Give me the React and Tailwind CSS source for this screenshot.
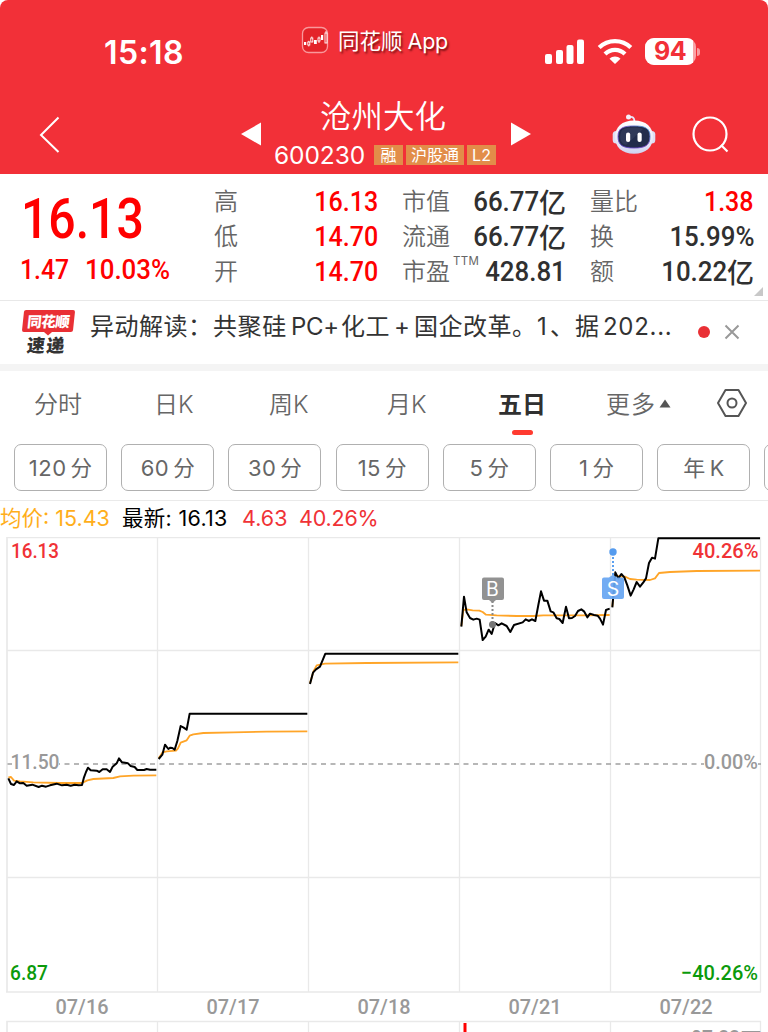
import React from "react";

const stats = [
    [
        { label: "高", value: "16.13", red: true },
        { label: "低", value: "14.70", red: true },
        { label: "开", value: "14.70", red: true },
    ],
    [
        { label: "市值", value: "66.77", unit: "亿" },
        { label: "流通", value: "66.77", unit: "亿" },
        { label: "市盈", value: "428.81", ttm: true },
    ],
    [
        { label: "量比", value: "1.38", red: true },
        { label: "换", value: "15.99%" },
        { label: "额", value: "10.22", unit: "亿" },
    ],
];

const periods = [["120", "分"], ["60", "分"], ["30", "分"], ["15", "分"], ["5", "分"], ["1", "分"], ["年", "K"]];

// the first three sessions and the last two are plotted in their own groups
const earlyAvg = [
    "25,412 33,411 42,422 60,424 100,427 180,429 246,429 262,421 280,417 340,414 360,409 400,407 469,406",
    "476,355 488,337 500,334 528,332 534,325 542,308 552,304 560,301 569,287 580,283 610,279 700,277 800,275 922,274",
    "930,130 940,95 950,76 975,71 1100,69 1375,67",
];
const earlyPrice = [
    "25,415 33,432 42,435 50,424 60,430 70,429 80,437 97,434 116,441 126,437 138,440 150,436 170,431 186,436 200,434 212,437 224,434 236,436 246,435 252,412 258,396 264,383 272,391 290,392 298,396 308,388 320,388 330,396 338,380 350,370 357,355 366,367 384,370 392,378 404,381 412,390 432,390 440,387 450,389 469,389",
    "476,357 487,344 495,314 505,327 511,323 517,324 524,329 532,303 542,258 551,263 560,269 569,221 922,221",
    "930,132 939,98 948,88 960,80 976,41 1375,41",
];
const lateAvg = [
    "34,288 40,240 50,238 68,241 88,242 98,246 108,254 140,256 200,258 250,258 280,256 400,256 479,255",
    "487,230 496,135 510,140 525,140 540,147 560,149 600,150 615,145 627,129 660,126 740,123 930,122",
];
const latePrice = [
    "34,290 42,200 50,247 60,264 70,269 80,266 89,269 98,330 107,320 116,299 125,312 135,279 145,286 155,280 170,288 181,306 192,285 218,277 227,268 236,273 246,268 256,273 265,225 273,184 282,212 292,212 302,244 310,247 320,265 328,267 338,279 348,230 357,265 366,264 375,258 384,243 394,238 402,244 412,262 420,251 432,255 443,257 450,266 459,284 468,240 479,236",
    "487,232 496,127 505,145 514,132 523,142 532,166 542,197 551,178 560,156 570,170 580,157 588,145 597,99 606,83 615,86 625,25 930,25",
];

const Lines = ({ data, color, width }) =>
    data.map((points) => (
        <polyline key={points} points={points} fill="none" stroke={color} strokeWidth={width} strokeLinejoin="round" />
    ));

const RobotIcon = () => (
    <svg width="44" height="42" viewBox="0 0 44 42">
        <defs>
            <linearGradient id="head" x1="0" y1="0" x2="0" y2="1">
                <stop offset="0" stopColor="#ffffff" />
                <stop offset="0.75" stopColor="#e2e2f5" />
                <stop offset="1" stopColor="#cdd2f0" />
            </linearGradient>
            <linearGradient id="rim" x1="0" y1="1" x2="1" y2="0">
                <stop offset="0" stopColor="#5a4bc8" />
                <stop offset="0.5" stopColor="#7a48c8" />
                <stop offset="1" stopColor="#3f9cc8" />
            </linearGradient>
        </defs>
        <path d="M17 4.200C21 3.200 22.500 5 22.500 9" fill="none" stroke="#e6e4f8" strokeWidth="1.800" />
        <circle cx="16.500" cy="4" r="2.500" fill="#f4f0fb" />
        <rect x="0.700" y="18" width="7" height="12.500" rx="3.500" fill="#dedef4" />
        <rect x="36.300" y="18" width="7" height="12.500" rx="3.500" fill="#dedef4" />
        <path d="M22 7.500C34 7.500 41 14 41 24S34 40.800 22 40.800 3 34 3 24 10 7.500 22 7.500Z" fill="url(#head)" />
        <path d="M22 13C32 13 38 14.500 38 23.500S33 35 22 35 6 32.500 6 23.500 12 13 22 13Z" fill="#222c4b" stroke="url(#rim)" strokeWidth="0.900" />
        <path d="M10 17C15 14 25 14 31 16L14 32C7 30 7 22 10 17Z" fill="#3c4666" opacity="0.5" />
        <rect x="14" y="19.500" width="4.200" height="9.500" rx="2.100" fill="#fff" />
        <rect x="25.500" y="19.500" width="4.200" height="9.500" rx="2.100" fill="#fff" />
    </svg>
);

const StatusBar = () => (
    <div className="flex h-[88px] items-start pt-[25px]">
        <div className="ml-[104px] mt-[8px] w-[197px] text-[32px] font-semibold leading-[40px] tracking-[0.4px]">15:18</div>
        <svg className="mt-[1px]" width="28" height="28" viewBox="0 0 28 28">
            <rect x="1.500" y="1.500" width="25" height="25" rx="6" fill="#e42329" stroke="#f9989b" strokeWidth="1.300" />
            <g fill="#fff">
                <rect x="3" y="16" width="2.200" height="3" />
                <rect x="13" y="14" width="2.800" height="4" />
                <rect x="20" y="9" width="2.200" height="5" />
            </g>
            <g fill="none" stroke="#fff" strokeWidth="0.900">
                <rect x="6.800" y="16" width="2" height="3" />
                <rect x="9.800" y="12" width="2" height="4" />
                <rect x="17" y="12" width="2" height="3" />
                <rect x="24" y="7" width="2" height="10" />
                <path d="M7.800 14.800V16M7.800 19V20.500M10.800 10.500V12M18 10.500V12M18 15V17M25 5V7" />
            </g>
        </svg>
        <div className="ml-[9px] mt-[1px] flex w-[207px] whitespace-nowrap text-[21.500px] leading-[30px] [text-shadow:1.500px_2px_2px_rgba(60,0,0,0.65)]">
            <span>同花顺</span>
            <span className="ml-[5px] tracking-[-0.2px]">App</span>
        </div>
        <svg className="mt-[14px]" width="40" height="25" viewBox="0 0 40 25" fill="#fff">
            <rect x="0" y="15" width="7" height="10" rx="2" />
            <rect x="11" y="11" width="7" height="14" rx="2" />
            <rect x="21.500" y="6" width="7" height="19" rx="2" />
            <rect x="32" y="0.500" width="7" height="24.500" rx="2" />
        </svg>
        <svg className="ml-[12px] mt-[13px]" width="36" height="27" viewBox="0 0 36 27" fill="none" stroke="#fff" strokeWidth="4.200">
            <path d="M2.200 9.600C11 1 25 1 33.800 9.600" />
            <path d="M8 16C13.500 10.500 22.500 10.500 28 16" />
            <path d="M12.500 20.700C15.500 17.700 20.500 17.700 23.500 20.700L18 26Z" fill="#fff" stroke="none" />
        </svg>
        <div className="ml-[12px] mt-[13px] flex items-center">
            <div className="flex h-[27px] w-[51px] overflow-hidden rounded-[9px] bg-[#f9a3a7]">
                <div className="flex w-[48px] items-center justify-center bg-white pl-[2px] text-[25px] font-bold leading-none tracking-[-0.6px] text-[#f23038]">94</div>
            </div>
            <div className="ml-[1px] h-[8px] w-[3px] rounded-r-full bg-[#f99ba0]"></div>
        </div>
    </div>
);

const Header = () => (
    <header className="h-[174px] rounded-t-[8px] bg-[#f23038] text-white">
        <StatusBar />
        <div className="flex h-[86px]">
            <svg className="ml-[38px] mt-[28px]" width="24" height="38" viewBox="0 0 24 38" fill="none" stroke="#fff" strokeWidth="2">
                <path d="M20.500 1.500L3 19L20.500 36" />
            </svg>
            <svg className="ml-[178px] mt-[34px]" width="22" height="24" viewBox="0 0 22 24">
                <path d="M21 0.500V23.500L1 12Z" fill="#fff" />
            </svg>
            <div className="ml-[12px] w-[236px]">
                <div className="ml-[46px] mt-[9px] whitespace-nowrap text-[31.500px] font-[350] leading-[40px]">沧州大化</div>
                <div className="mt-[6px] flex items-center whitespace-nowrap leading-[24px]">
                    <span className="w-[100px] text-[24.500px] tracking-[-0.1px]">600230</span>
                    <span className="flex h-[20px] w-[29px] items-center justify-center bg-[#e28d49] text-[16px]">融</span>
                    <span className="ml-[3px] flex h-[20px] w-[58px] items-center justify-center bg-[#e28d49] text-[16px]">沪股通</span>
                    <span className="ml-[3px] flex h-[20px] w-[29px] items-center justify-center bg-[#e28d49] text-[16px]">L2</span>
                </div>
            </div>
            <svg className="mt-[34px]" width="22" height="24" viewBox="0 0 22 24">
                <path d="M1 0.500V23.500L21 12Z" fill="#fff" />
            </svg>
            <div className="ml-[80px] mt-[25px]">
                <RobotIcon />
            </div>
            <svg className="ml-[36px] mt-[27px]" width="40" height="40" viewBox="0 0 40 40" fill="none" stroke="#fff" strokeWidth="2.200">
                <circle cx="18" cy="19" r="16.500" />
                <path d="M29 30L35.500 36.500" />
            </svg>
        </div>
    </header>
);

const Stat = ({ item }) => (
    <div className="flex h-[35px] items-center justify-between whitespace-nowrap">
        <span className="flex text-[24px] font-[350] text-[#666]">
            {item.label}
            {item.ttm && <sup className="top-[-3px] ml-[3px] w-0 text-[11.500px] font-normal leading-[20px] tracking-[0.3px]">TTM</sup>}
        </span>
        <span className={item.red ? "flex items-center font-['Roboto'] text-[27.500px] font-medium text-[#ff0000]" : "flex items-center font-['Roboto'] text-[27.500px] font-medium text-[#303030]"}>
            <span className={item.red ? "origin-right scale-x-[0.91]" : "origin-right scale-x-[0.94]"}>{item.value}</span>
            {item.unit && <span className="font-['Noto_Sans_CJK_SC'] text-[27px] leading-[35px]">{item.unit}</span>}
        </span>
    </div>
);

const Quote = () => (
    <section className="flex h-[127px] border-b border-[#e8e8e8]">
        <div className="w-[214px] font-['Roboto'] font-medium text-[#ff0000]">
            <div className="ml-[21px] mt-[13px] w-[140px] origin-left scale-x-[0.86] text-[56px] leading-[64px]">16.13</div>
            <div className="ml-[20px] mt-[2px] flex text-[27.500px] leading-[34px]">
                <span className="w-[65px] origin-left scale-x-[0.9]">1.47</span>
                <span className="origin-left scale-x-[0.94]">10.03%</span>
            </div>
        </div>
        <div className="mt-[10px] flex gap-[24px]">
            {stats.map((column, i) => (
                <div key={i} className="w-[164px]">
                    {column.map((item) => <Stat key={item.label} item={item} />)}
                </div>
            ))}
        </div>
        <svg className="mt-[113px]" width="10" height="10" viewBox="0 0 10 10">
            <path d="M9 0V9H0Z" fill="#c8c8c8" />
        </svg>
    </section>
);

const News = () => (
    <section className="flex h-[63px] text-[#333]">
        <div className="ml-[23px] mt-[9px] w-[67px] font-['Noto_Sans_CJK_SC']">
            <div className="flex h-[22px] w-[51px] -skew-x-6 items-center justify-center rounded-[2px] bg-[#e93035] text-[14.500px] font-black leading-none tracking-[-0.5px] text-white">同花顺</div>
            <svg className="ml-[21px]" width="8" height="4" viewBox="0 0 8 4"><path d="M0 0H8L4 3.500Z" fill="#e93035" /></svg>
            <div className="-mt-[1px] ml-[4px] w-[42px] -skew-x-6 whitespace-nowrap text-[18px] font-black leading-[18px] tracking-[1.500px]">速递</div>
        </div>
        <div className="mt-[9px] flex w-[606px] whitespace-nowrap text-[24px] leading-[34px]">
            <span className="w-[123px] tracking-[0.5px]">异动解读：</span>
            <span className="w-[78px] tracking-[0.6px]">共聚硅</span>
            <span className="w-[50px] tracking-[-0.3px]">PC+</span>
            <span className="w-[53px] tracking-[0.5px]">化工</span>
            <span className="w-[20px]">+</span>
            <span className="w-[123px] tracking-[0.5px]">国企改革。</span>
            <span className="w-[13px]">1</span>
            <span className="w-[25px]">、</span>
            <span className="w-[28px]">据</span>
            <span className="tracking-[0.7px]">202...</span>
        </div>
        <div className="ml-[2px] mt-[25px] h-[12px] w-[12px] rounded-full bg-[#e93035]"></div>
        <svg className="ml-[14px] mt-[23px]" width="16" height="16" viewBox="0 0 16 16" stroke="#999" strokeWidth="2">
            <path d="M1.500 1.500L14.500 14.500M14.500 1.500L1.500 14.500" />
        </svg>
    </section>
);

const Tabs = () => (
    <nav className="flex h-[64px] whitespace-nowrap pt-[16px] text-[24px] font-[350] leading-[36px] text-[#666]">
        <span className="ml-[34px] w-[120px]">分时</span>
        <span className="w-[115px]">日K</span>
        <span className="w-[118px]">周K</span>
        <span className="w-[111px]">月K</span>
        <div className="flex w-[108px] flex-col">
            <span className="font-bold text-[#303030]">五日</span>
            <span className="ml-[14px] mt-[7px] h-[5px] w-[21px] rounded-full bg-[#ff3b30]"></span>
        </div>
        <div className="flex w-[110px]">
            <span className="tracking-[1px]">更多</span>
            <svg className="ml-[3px] mt-[12px]" width="12" height="9" viewBox="0 0 12 9"><path d="M6 0.500L11.500 8.500H0.500Z" fill="#555" /></svg>
        </div>
        <svg className="mt-[1px]" width="32" height="30" viewBox="0 0 32 30" fill="none" stroke="#555" strokeWidth="2">
            <path d="M9.500 2H22.500L30 15L22.500 28H9.500L2 15Z" strokeLinejoin="round" />
            <circle cx="16" cy="15" r="4.500" />
        </svg>
    </nav>
);

const Periods = () => (
    <div className="flex h-[66px] gap-[14.200px] overflow-hidden border-b border-[#eaeaea] pl-[14px] pt-[9px]">
        {periods.map(([a, b]) => (
            <button key={a} className="flex h-[47px] w-[93px] shrink-0 items-center justify-center gap-[4px] rounded-[7px] border border-[#b0b0b0] pt-[1px] text-[22px] text-[#666]">
                <span className="tracking-[0.5px]">{a}</span>
                <span className="text-[21.500px]">{b}</span>
            </button>
        ))}
        <button className="h-[47px] w-[93px] shrink-0 rounded-[7px] border border-[#b0b0b0]"></button>
    </div>
);

const Chart = () => (
    <svg className="block" width="768" height="495" viewBox="0 537 768 495" fontFamily="Roboto" fontWeight="500" fontSize="21">
        <g stroke="#e9e9e9" strokeWidth="1.300" fill="none">
            <path d="M7 537.500H761M7 650.500H761M7 877.500H761" />
            <path d="M157.500 537V992M308.500 537V992M459.500 537V992M610.500 537V992M760.500 537V992" />
            <path d="M157.500 1021V1032M308.500 1021V1032M459.500 1021V1032M610.500 1021V1032M760.500 1021V1032" />
            <path d="M7 537V992M6 992H761M7 1032V1021.500H761" strokeWidth="1.700" />
        </g>
        <path d="M7.500 764H761" stroke="#a0a0a0" strokeWidth="1.600" strokeDasharray="5 4.500" />
        <g fill="#fff">
            <rect x="12" y="752" width="47" height="20" />
            <rect x="704" y="752" width="54" height="20" />
        </g>
        <text x="10.500" y="769" textLength="49" lengthAdjust="spacingAndGlyphs" fill="#999">11.50</text>
        <text x="704" y="769" textLength="54" lengthAdjust="spacingAndGlyphs" fill="#999">0.00%</text>
        <g transform="translate(0 640) scale(0.33333)">
            <Lines data={earlyAvg} color="#ffa528" width="5.500" />
            <Lines data={earlyPrice} color="#000" width="6" />
        </g>
        <g transform="translate(450 530) scale(0.33333)">
            <Lines data={lateAvg} color="#ffa528" width="5.500" />
            <Lines data={latePrice} color="#000" width="6" />
        </g>
        <path d="M492.500 601V623" stroke="#888" strokeWidth="2" strokeDasharray="2 2" />
        <circle cx="492.500" cy="624.500" r="3.500" fill="#777" />
        <path d="M484 577.500H502Q504 577.500 504 579.500V598Q504 600 502 600H496L492.500 603L489 600H484Q482 600 482 598V579.500Q482 577.500 484 577.500Z" fill="#8c8c8c" opacity="0.95" />
        <path d="M613 553V576" stroke="#5ba0f0" strokeWidth="2" strokeDasharray="2 2" />
        <circle cx="613" cy="552" r="3.700" fill="#559bee" />
        <path d="M604 577.500H609L613 574.500L617 577.500H622Q624 577.500 624 579.500V597Q624 599 622 599H604Q602 599 602 597V579.500Q602 577.500 604 577.500Z" fill="#67a6f2" opacity="0.93" />
        <g fill="#fff" fontFamily="Inter" fontWeight="400" fontSize="19.500" textAnchor="middle">
            <text x="492.500" y="596">B</text>
            <text x="613" y="596">S</text>
        </g>
        <g fill="#f03236">
            <text x="11" y="557.500" textLength="48" lengthAdjust="spacingAndGlyphs">16.13</text>
            <text x="692.500" y="557.500" textLength="66" lengthAdjust="spacingAndGlyphs">40.26%</text>
        </g>
        <g fill="#0b9a0b">
            <text x="10" y="979.500" textLength="38" lengthAdjust="spacingAndGlyphs">6.87</text>
            <text x="681" y="979.500" textLength="77" lengthAdjust="spacingAndGlyphs">−40.26%</text>
        </g>
        <g fill="#999">
            <text x="55.500" y="1013.500" textLength="53" lengthAdjust="spacingAndGlyphs">07/16</text>
            <text x="206.500" y="1013.500" textLength="53" lengthAdjust="spacingAndGlyphs">07/17</text>
            <text x="357.500" y="1013.500" textLength="53" lengthAdjust="spacingAndGlyphs">07/18</text>
            <text x="508.500" y="1013.500" textLength="53" lengthAdjust="spacingAndGlyphs">07/21</text>
            <text x="659.500" y="1013.500" textLength="53" lengthAdjust="spacingAndGlyphs">07/22</text>
        </g>
        <rect x="463.500" y="1023" width="3" height="9" fill="#ff0000" />
        <text x="691" y="1044.500" textLength="49" lengthAdjust="spacingAndGlyphs" fill="#999">07.22</text>
        <text x="740.500" y="1047" fill="#999" fontFamily="Noto Sans CJK SC">万</text>
    </svg>
);

const App = () => {
    return (
        <main className="h-[1032px] w-[768px] overflow-hidden bg-white font-['Inter','Noto_Sans_CJK_SC',sans-serif]">
            <Header />
            <Quote />
            <News />
            <div className="h-[7px] bg-[#f4f4f4]"></div>
            <Tabs />
            <Periods />
            <div className="flex h-[36px] whitespace-nowrap text-[21.500px] leading-[35px]">
                <span className="w-[122px] text-[#ffae1a]">均价: 15.43</span>
                <span className="w-[120px] tracking-[0.3px] text-black">最新: 16.13</span>
                <span className="w-[57px] text-[#f03236]">4.63</span>
                <span className="tracking-[-0.2px] text-[#f03236]">40.26%</span>
            </div>
            <Chart />
        </main>
    );
};

export default App;
